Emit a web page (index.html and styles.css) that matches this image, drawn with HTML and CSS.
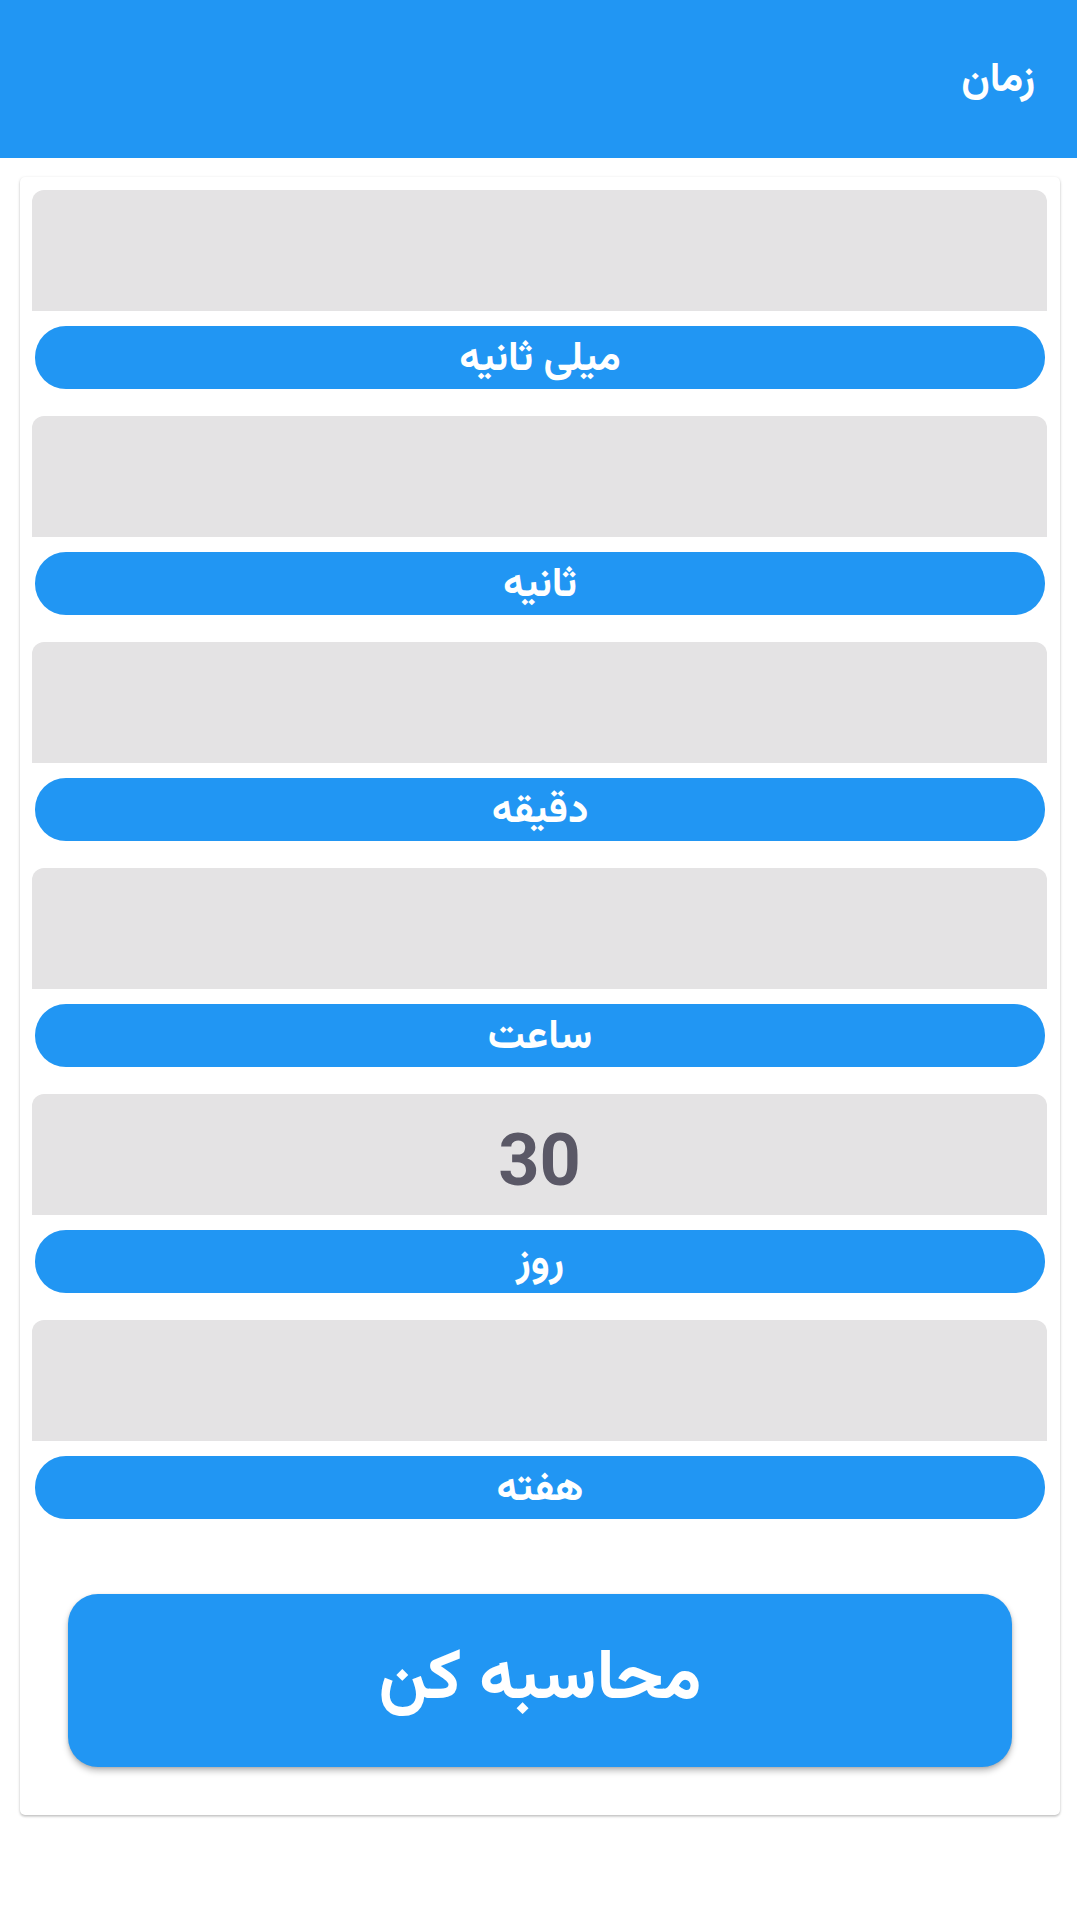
FILE: index.html
```html
<!DOCTYPE html>
<html lang="fa" dir="rtl">
<head>
<meta charset="utf-8">
<title>زمان</title>
<link rel="stylesheet" href="styles.css">
</head>
<body>
<header class="appbar"><h1 class="appbar-title">زمان</h1></header>
<main class="card">
  <div class="field"><div class="input"></div><div class="label">میلی ثانیه</div></div>
  <div class="field"><div class="input"></div><div class="label">ثانیه</div></div>
  <div class="field"><div class="input"></div><div class="label">دقیقه</div></div>
  <div class="field"><div class="input"></div><div class="label">ساعت</div></div>
  <div class="field"><div class="input"><span class="value">30</span></div><div class="label">روز</div></div>
  <div class="field"><div class="input"></div><div class="label">هفته</div></div>
  <button class="calc">محاسبه کن</button>
</main>
</body>
</html>
```
FILE: styles.css
```css
* { box-sizing: border-box; }
html, body { margin: 0; padding: 0; background: #ffffff; }
body {
  width: 1077px;
  min-height: 1915px;
  font-family: "Vazirmatn", "Vazir", "Noto Sans Arabic", "Noto Naskh Arabic", "DejaVu Sans", sans-serif;
}
.appbar {
  height: 158px;
  background: #2196F3;
  display: flex;
  align-items: center;
  padding: 0 42px 0 0;
}
.appbar-title {
  margin: 0;
  color: #ffffff;
  font-size: 41px;
  font-weight: 700;
  line-height: 1;
  padding-top: 4px;
}
.card {
  margin: 19px 17px 0 20px;
  width: 1040px;
  background: #ffffff;
  border-radius: 5px;
  box-shadow: 0 1px 3px rgba(0,0,0,0.22), 0 2px 2px rgba(0,0,0,0.08);
  padding: 13px 13px 48px 12px;
  display: flex;
  flex-direction: column;
}
.field {
  display: flex;
  flex-direction: column;
  gap: 15px;
  margin-bottom: 27px;
}
.input {
  height: 121px;
  background: #E4E3E4;
  border-radius: 12px 12px 0 0;
  display: flex;
  align-items: center;
  justify-content: center;
  padding-top: 12px;
}
.value {
  font-family: Roboto, "Liberation Sans", sans-serif;
  font-weight: 700;
  font-size: 72px;
  color: #5A5866;
  line-height: 1;
}
.label {
  height: 63px;
  margin: 0 2px 0 3px;
  background: #2196F3;
  border-radius: 31px;
  color: #ffffff;
  font-size: 41px;
  font-weight: 700;
  display: flex;
  align-items: center;
  justify-content: center;
  line-height: 1;
  padding-top: 5px;
}
.calc {
  margin: 48px 35px 0 36px;
  height: 173px;
  border: none;
  border-radius: 30px;
  background: #2196F3;
  color: #ffffff;
  font-family: inherit;
  font-size: 70px;
  font-weight: 700;
  box-shadow: 0 4px 6px rgba(0,0,0,0.25), 0 1px 3px rgba(0,0,0,0.12);
}
```
